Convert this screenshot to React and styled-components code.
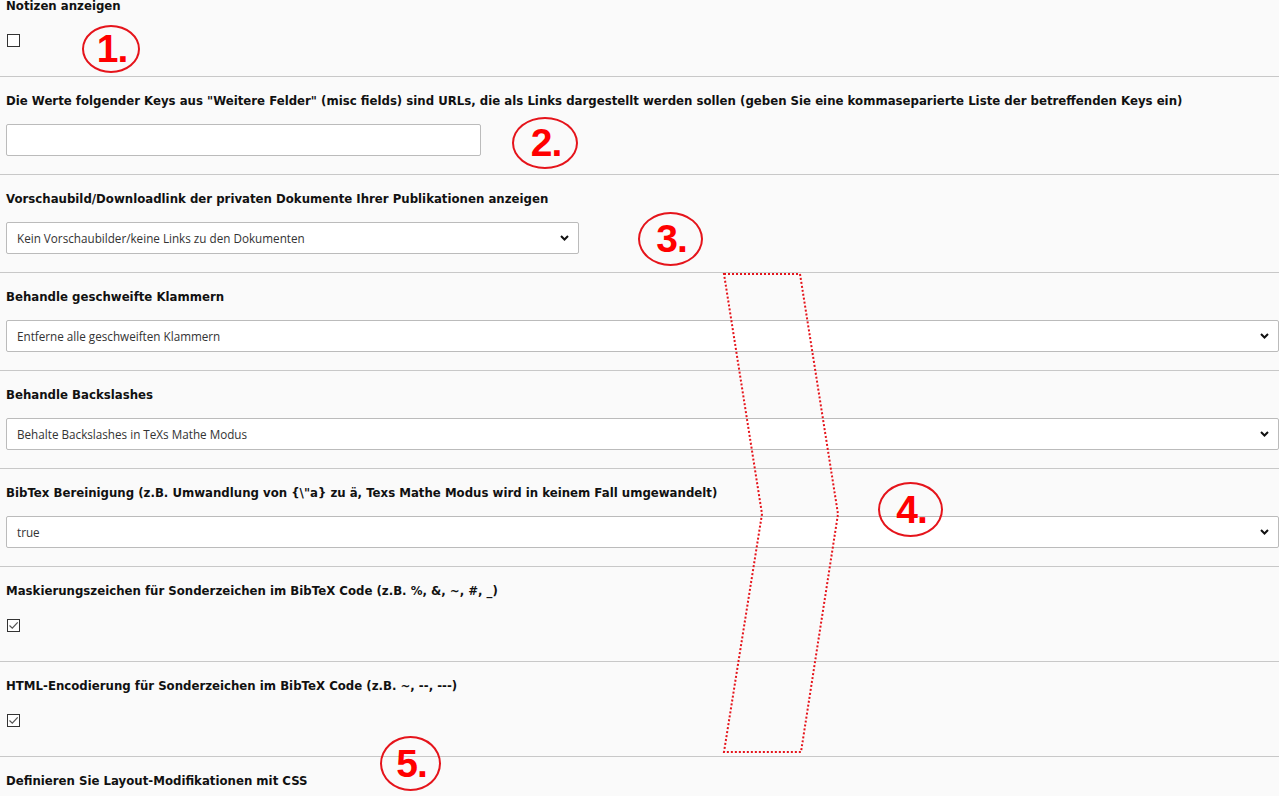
import React from "react";
import styled, { createGlobalStyle } from "styled-components";

const Global = createGlobalStyle`
  html, body { margin: 0; padding: 0; background: #fafafa; }
  body { font-family: "DejaVu Sans", Verdana, sans-serif; color: #111; overflow: hidden; }
`;

const Page = styled.div`
  position: relative;
  width: 1279px;
  height: 796px;
  overflow: hidden;
  background: #fafafa;
`;

const Section = styled.div`
  border-top: ${(p) => (p.$first ? "none" : "1px solid #c8c8c8")};
  padding: ${(p) => (p.$first ? "0" : "16px")} 0 ${(p) => p.$bottom || 18}px 6px;
  display: flex;
  flex-direction: column;
  align-items: flex-start;
`;

const Label = styled.div`
  font-size: 11.75px;
  font-weight: bold;
  line-height: 16px;
  margin-top: ${(p) => (p.$first ? "-2px" : "0")};
  white-space: nowrap;
`;

const Field = styled.div`
  margin-top: ${(p) => p.$gap || 15}px;
  width: ${(p) => p.$w || "auto"};
  align-self: ${(p) => (p.$full ? "stretch" : "flex-start")};
  position: relative;
`;

const TextInput = styled.input`
  box-sizing: border-box;
  width: 475px;
  height: 32px;
  border: 1px solid #bbb;
  border-radius: 2px;
  background: #fff;
  display: block;
  outline: none;
`;

const SelectBox = styled.div`
  box-sizing: border-box;
  height: 32px;
  border: 1px solid #bbb;
  border-radius: 2px;
  background: #fff;
  display: flex;
  align-items: center;
  justify-content: space-between;
  padding: 0 9px 1px 10px;
  font-family: "Open Sans", "DejaVu Sans", sans-serif;
  font-size: 11.7px;
  color: #333;
`;

const Chevron = () => (
  <svg width="9" height="6" viewBox="0 0 9 6">
    <path d="M1 1 L4.5 4.5 L8 1" fill="none" stroke="#111" strokeWidth="2" />
  </svg>
);

const Check = styled.span`
  box-sizing: border-box;
  display: block;
  width: 13px;
  height: 13px;
  border: 1px solid #333;
  background: #fff;
  margin-left: 1px;
  position: relative;
`;

const Checkbox = ({ checked }) => (
  <Check>
    {checked && (
      <svg width="11" height="11" viewBox="0 0 11 11" style={{ position: "absolute", left: 0, top: 0 }}>
        <path d="M1.5 5.5 L4.3 8.2 L9.7 2.3" fill="none" stroke="#555" strokeWidth="1.2" />
      </svg>
    )}
  </Check>
);

const Badge = styled.div`
  position: absolute;
  left: ${(p) => p.$x}px;
  top: ${(p) => p.$y}px;
  width: ${(p) => p.$w}px;
  height: ${(p) => p.$h}px;
  border: 2px solid #e5141b;
  border-radius: 50%;
  box-sizing: border-box;
  display: flex;
  align-items: center;
  justify-content: center;
  color: #f00;
  font-family: "Liberation Sans", Arial, sans-serif;
  font-weight: bold;
  font-size: 39px;
  letter-spacing: -1px;
  padding-left: 2px;
`;

const Arrow = styled.svg`
  position: absolute;
  left: 0;
  top: 0;
  pointer-events: none;
`;

function Select({ value, width }) {
  return (
    <Field $full={!width} $w={width}>
      <SelectBox>
        <span>{value}</span>
        <Chevron />
      </SelectBox>
    </Field>
  );
}

export default function App() {
  return (
    <Page>
      <Global />
      <Section $first $bottom={29}>
        <Label $first>Notizen anzeigen</Label>
        <Field $gap={20}>
          <Checkbox />
        </Field>
      </Section>
      <Section>
        <Label>
          Die Werte folgender Keys aus "Weitere Felder" (misc fields) sind URLs, die als Links dargestellt werden sollen (geben Sie eine kommaseparierte Liste der betreffenden Keys ein)
        </Label>
        <Field>
          <TextInput />
        </Field>
      </Section>
      <Section>
        <Label>Vorschaubild/Downloadlink der privaten Dokumente Ihrer Publikationen anzeigen</Label>
        <Select width="573px" value="Kein Vorschaubilder/keine Links zu den Dokumenten" />
      </Section>
      <Section>
        <Label>Behandle geschweifte Klammern</Label>
        <Select value="Entferne alle geschweiften Klammern" />
      </Section>
      <Section>
        <Label>Behandle Backslashes</Label>
        <Select value="Behalte Backslashes in TeXs Mathe Modus" />
      </Section>
      <Section>
        <Label>BibTex Bereinigung (z.B. Umwandlung von {"{\\\"a}"} zu ä, Texs Mathe Modus wird in keinem Fall umgewandelt)</Label>
        <Select value="true" />
      </Section>
      <Section $bottom={29}>
        <Label>Maskierungszeichen für Sonderzeichen im BibTeX Code (z.B. %, &amp;, ~, #, _)</Label>
        <Field $gap={20}>
          <Checkbox checked />
        </Field>
      </Section>
      <Section $bottom={29}>
        <Label>HTML-Encodierung für Sonderzeichen im BibTeX Code (z.B. ~, --, ---)</Label>
        <Field $gap={20}>
          <Checkbox checked />
        </Field>
      </Section>
      <Section>
        <Label>Definieren Sie Layout-Modifikationen mit CSS</Label>
      </Section>

      <Arrow width="1279" height="796" viewBox="0 0 1279 796">
        <polygon
          points="724,274 800,274 838,514 801,752 724,752 762,514"
          fill="none"
          stroke="#e5141b"
          strokeWidth="2"
          strokeDasharray="2 2"
        />
      </Arrow>
      <Badge $x={82} $y={25} $w={58} $h={48}>1.</Badge>
      <Badge $x={512} $y={117} $w={66} $h={52}>2.</Badge>
      <Badge $x={638} $y={212} $w={65} $h={54}>3.</Badge>
      <Badge $x={878} $y={482} $w={65} $h={55}>4.</Badge>
      <Badge $x={380} $y={736} $w={61} $h={55}>5.</Badge>
    </Page>
  );
}
